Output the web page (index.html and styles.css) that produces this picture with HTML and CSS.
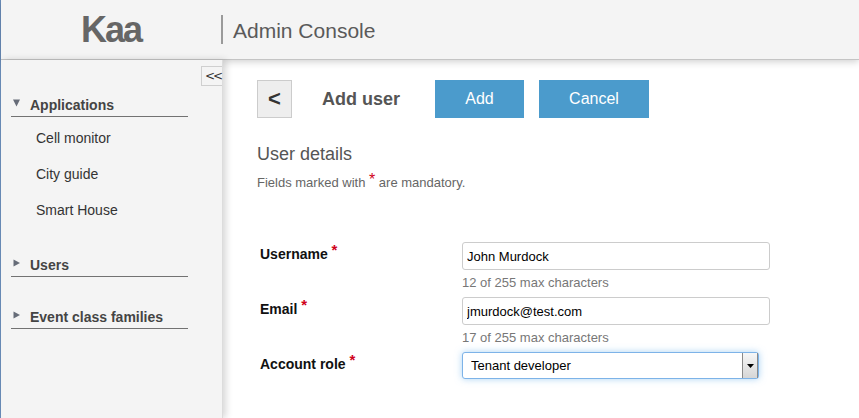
FILE: index.html
```html
<!DOCTYPE html>
<html lang="en">
<head>
<meta charset="utf-8">
<title>Kaa Admin Console</title>
<link rel="stylesheet" href="styles.css">
</head>
<body>
<div class="app">
  <header class="topbar">
    <div class="brand">Kaa</div>
    <div class="title">Admin Console</div>
  </header>
  <div class="main">
    <aside class="sidebar">
      <div class="collapse-row"><button class="collapse">&lt;&lt;</button></div>
      <section class="nav-section">
        <div class="nav-head">
          <svg class="tri" width="7" height="8" viewBox="0 0 7 8"><path d="M0 0.5H7L3.5 7.5Z" fill="#666c78"/></svg>
          <span>Applications</span>
        </div>
        <ul class="nav-list">
          <li>Cell monitor</li>
          <li>City guide</li>
          <li>Smart House</li>
        </ul>
      </section>
      <section class="nav-section">
        <div class="nav-head">
          <svg class="tri" width="7" height="8" viewBox="0 0 7 8"><path d="M0.5 0.5L7 4L0.5 7.5Z" fill="#666c78"/></svg>
          <span>Users</span>
        </div>
        <ul class="nav-list"></ul>
      </section>
      <section class="nav-section">
        <div class="nav-head">
          <svg class="tri" width="7" height="8" viewBox="0 0 7 8"><path d="M0.5 0.5L7 4L0.5 7.5Z" fill="#666c78"/></svg>
          <span>Event class families</span>
        </div>
        <ul class="nav-list"></ul>
      </section>
    </aside>
    <main class="content">
      <div class="toolbar">
        <button class="back">&lt;</button>
        <h1 class="page-title">Add user</h1>
        <button class="btn">Add</button>
        <button class="btn btn-cancel">Cancel</button>
      </div>
      <h2 class="section-title">User details</h2>
      <p class="note">Fields marked with <span class="req">*</span> are mandatory.</p>
      <form class="form">
        <div class="row">
          <label class="label">Username <span class="req">*</span></label>
          <div class="field">
            <input class="input" type="text" value="John Murdock">
            <div class="hint">12 of 255 max characters</div>
          </div>
        </div>
        <div class="row">
          <label class="label">Email <span class="req">*</span></label>
          <div class="field">
            <input class="input" type="text" value="jmurdock@test.com">
            <div class="hint">17 of 255 max characters</div>
          </div>
        </div>
        <div class="row">
          <label class="label">Account role <span class="req">*</span></label>
          <div class="field">
            <div class="select-wrap">
              <select class="select"><option>Tenant developer</option></select>
              <span class="arrow"><svg width="7" height="4" viewBox="0 0 7 4"><path d="M0 0H7L3.5 4Z" fill="#000"/></svg></span>
            </div>
          </div>
        </div>
      </form>
    </main>
  </div>
</div>
</body>
</html>
```

FILE: styles.css
```css
* { box-sizing: border-box; }
html, body {
  margin: 0;
  padding: 0;
  height: 100%;
  overflow: hidden;
  background: #fff;
  font-family: "Liberation Sans", Arial, sans-serif;
}
.app {
  height: 418px;
  display: flex;
  flex-direction: column;
  border-left: 1px solid #6a8dba;
}
.topbar {
  position: relative;
  z-index: 1;
  height: 60px;
  flex: none;
  display: flex;
  align-items: center;
  background: #f4f4f4;
  border-bottom: 1px solid #c4c4c4;
  box-shadow: 0 2px 7px rgba(0, 0, 0, 0.18);
}
.brand {
  width: 220px;
  text-align: center;
  font-size: 36px;
  font-weight: bold;
  letter-spacing: -2px;
  color: #666;
  line-height: 40px;
}
.title {
  height: 29px;
  margin-top: -1px;
  border-left: 2px solid #9a9a9a;
  padding-left: 10px;
  font-size: 21px;
  line-height: 31px;
  color: #5a5a5a;
}
.main {
  flex: 1;
  display: flex;
  min-height: 0;
}
.sidebar {
  position: relative;
  z-index: 2;
  width: 222px;
  flex: none;
  background: #f4f4f4;
  border-right: 1px solid #dcdcdc;
  box-shadow: 3px 0 7px rgba(0, 0, 0, 0.16);
}
.collapse-row {
  display: flex;
  justify-content: flex-end;
  padding-top: 6px;
}
.collapse {
  width: 21px;
  height: 20px;
  margin: 0;
  padding: 0 1px 0 0;
  border: 1px solid #cfcfcf;
  border-right: none;
  background: #f4f4f4;
  font-family: "DejaVu Sans", sans-serif;
  font-size: 12px;
  line-height: 17px;
  color: #333;
  letter-spacing: -2px;
  text-align: right;
}
.nav-section {
  width: 177px;
  margin-left: 10px;
  margin-bottom: 28px;
}
.collapse-row + .nav-section { margin-top: 10px; }
.nav-head {
  display: flex;
  align-items: center;
  height: 21px;
  padding-bottom: 2px;
  border-bottom: 1px solid #727272;
  font-size: 14px;
  font-weight: bold;
  color: #444;
}
.tri {
  margin-left: 2px;
  margin-right: 10px;
  margin-top: -4px;
  flex: none;
}
.nav-list {
  list-style: none;
  margin: 0;
  padding: 3px 0 0 25px;
}
.nav-list li {
  height: 36px;
  line-height: 36px;
  font-size: 14px;
  color: #333;
}
.content {
  flex: 1;
  padding: 20px 0 0 34px;
}
.toolbar {
  display: flex;
  align-items: center;
  height: 38px;
}
.back {
  width: 35px;
  height: 38px;
  margin: 0;
  padding: 0;
  border: 1px solid #cccccc;
  background: #eeeeee;
  font-family: "Liberation Sans", Arial, sans-serif;
  font-size: 22px;
  font-weight: bold;
  color: #333;
}
.page-title {
  margin: 0 35px 0 30px;
  font-size: 18px;
  font-weight: bold;
  color: #555;
}
.btn {
  width: 89px;
  height: 38px;
  margin: 0 15px 0 0;
  padding: 0;
  border: none;
  background: #4b9bcc;
  color: #fff;
  font-family: "Liberation Sans", Arial, sans-serif;
  font-size: 16px;
}
.btn-cancel { width: 110px; }
.section-title {
  margin: 26px 0 0;
  font-size: 18px;
  font-weight: normal;
  line-height: 21px;
  color: #555;
}
.note {
  margin: 10px 0 0;
  font-size: 13px;
  line-height: 16px;
  color: #666;
}
.req {
  color: #d0021b;
  font-size: 16px;
  position: relative;
  top: -2px;
  line-height: 0;
}
.form {
  margin-top: 51px;
  padding-left: 3px;
}
.row {
  display: flex;
}
.label {
  width: 202px;
  flex: none;
  padding-top: 1px;
  font-size: 14px;
  font-weight: bold;
  line-height: 22px;
  color: #111;
}
.label .req { font-size: 15px; top: -4px; }
.field {
  width: 308px;
}
.input {
  display: block;
  width: 308px;
  height: 28px;
  margin: 0;
  padding: 0 4px;
  border: 1px solid #cccccc;
  border-radius: 3px;
  font-family: "Liberation Sans", Arial, sans-serif;
  font-size: 13px;
  color: #000;
  background: #fff;
}
.hint {
  margin: 5px 0 6px;
  font-size: 13px;
  line-height: 16px;
  color: #777;
}
.select-wrap {
  position: relative;
  width: 297px;
  height: 27px;
}
.select {
  display: block;
  width: 297px;
  height: 27px;
  margin: 0;
  padding: 0 0 0 8px;
  -webkit-appearance: none;
  appearance: none;
  border: 1px solid #7db3e8;
  border-radius: 3px;
  box-shadow: 0 0 7px rgba(102, 175, 233, 0.55);
  background: #fff;
  font-family: "Liberation Sans", Arial, sans-serif;
  font-size: 13px;
  color: #000;
  outline: none;
}
.arrow {
  position: absolute;
  top: 1px;
  right: 1px;
  width: 16px;
  height: 25px;
  display: flex;
  align-items: center;
  justify-content: center;
  border-left: 1px solid #8a8a8a;
  border-right: 1px solid #8a8a8a;
  background: linear-gradient(#f7f7f7, #d6d6d6);
}
```
